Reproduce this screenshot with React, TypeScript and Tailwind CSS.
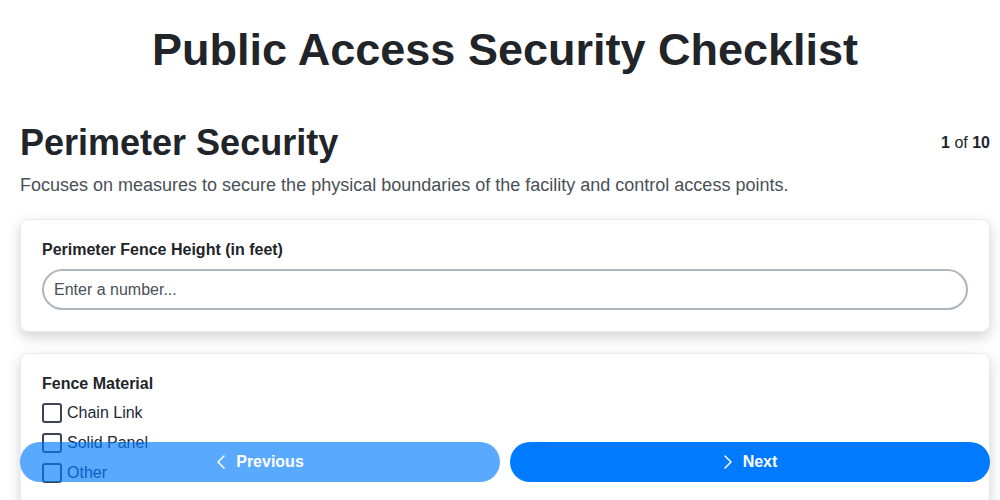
import { ChevronLeft, ChevronRight } from "lucide-react";

const materials = ["Chain Link", "Solid Panel", "Other"];

export default function App() {
  return (
    <div className="min-h-screen bg-white pb-24 pl-5 pr-2.5 pt-[23px] font-['Liberation_Sans',Arial,sans-serif] text-[#212529]">
      <h1 className="text-center text-[45px] font-bold leading-[1.2]">
        Public Access Security Checklist
      </h1>

      <div className="mt-[44px] flex items-center justify-between">
        <h2 className="text-[36px] font-bold leading-[1.2]">Perimeter Security</h2>
        <div className="text-base">
          <span className="font-bold">1</span> of <span className="font-bold">10</span>
        </div>
      </div>
      <p className="mt-2 text-lg leading-[1.5] text-[#495057]">
        Focuses on measures to secure the physical boundaries of the facility and control access points.
      </p>

      <div className="mt-5 space-y-[21px]">
        <section className="rounded-lg border border-[#e9ecef] bg-white px-[21px] pb-[21px] pt-[18px] shadow-[0_5px_14px_rgba(0,0,0,0.18)]">
          <label className="block text-base font-bold leading-6">Perimeter Fence Height (in feet)</label>
          <input
            type="number"
            placeholder="Enter a number..."
            className="mt-[7px] h-[41px] w-full rounded-full border-2 border-[#adb5bd] px-[10px] text-base text-[#212529] outline-none placeholder:text-[#495057]"
          />
        </section>

        <section className="rounded-lg border border-[#e9ecef] bg-white px-[21px] pb-5 pt-[18px] shadow-[0_5px_14px_rgba(0,0,0,0.18)]">
          <label className="block text-base font-bold leading-6">Fence Material</label>
          <div className="mt-[7px] space-y-[10px]">
            {materials.map((m) => (
              <label key={m} className="flex items-center gap-[5px] text-base leading-5 text-[#1f2937]">
                <span className="h-5 w-5 rounded-[3px] border-2 border-[#3d4352] bg-white" />
                {m}
              </label>
            ))}
          </div>
        </section>
      </div>

      <div className="fixed bottom-[18px] left-5 right-2.5 flex gap-2.5">
        <button
          disabled
          className="flex h-10 flex-1 items-center justify-center gap-[3px] rounded-full bg-[#007bff] pr-[7px] text-base font-bold text-white opacity-65"
        >
          <ChevronLeft size={24} strokeWidth={1.5} />
          Previous
        </button>
        <button className="flex h-10 flex-1 items-center justify-center gap-[3px] rounded-full bg-[#007bff] pr-[7px] text-base font-bold text-white">
          <ChevronRight size={24} strokeWidth={1.5} />
          Next
        </button>
      </div>
    </div>
  );
}
